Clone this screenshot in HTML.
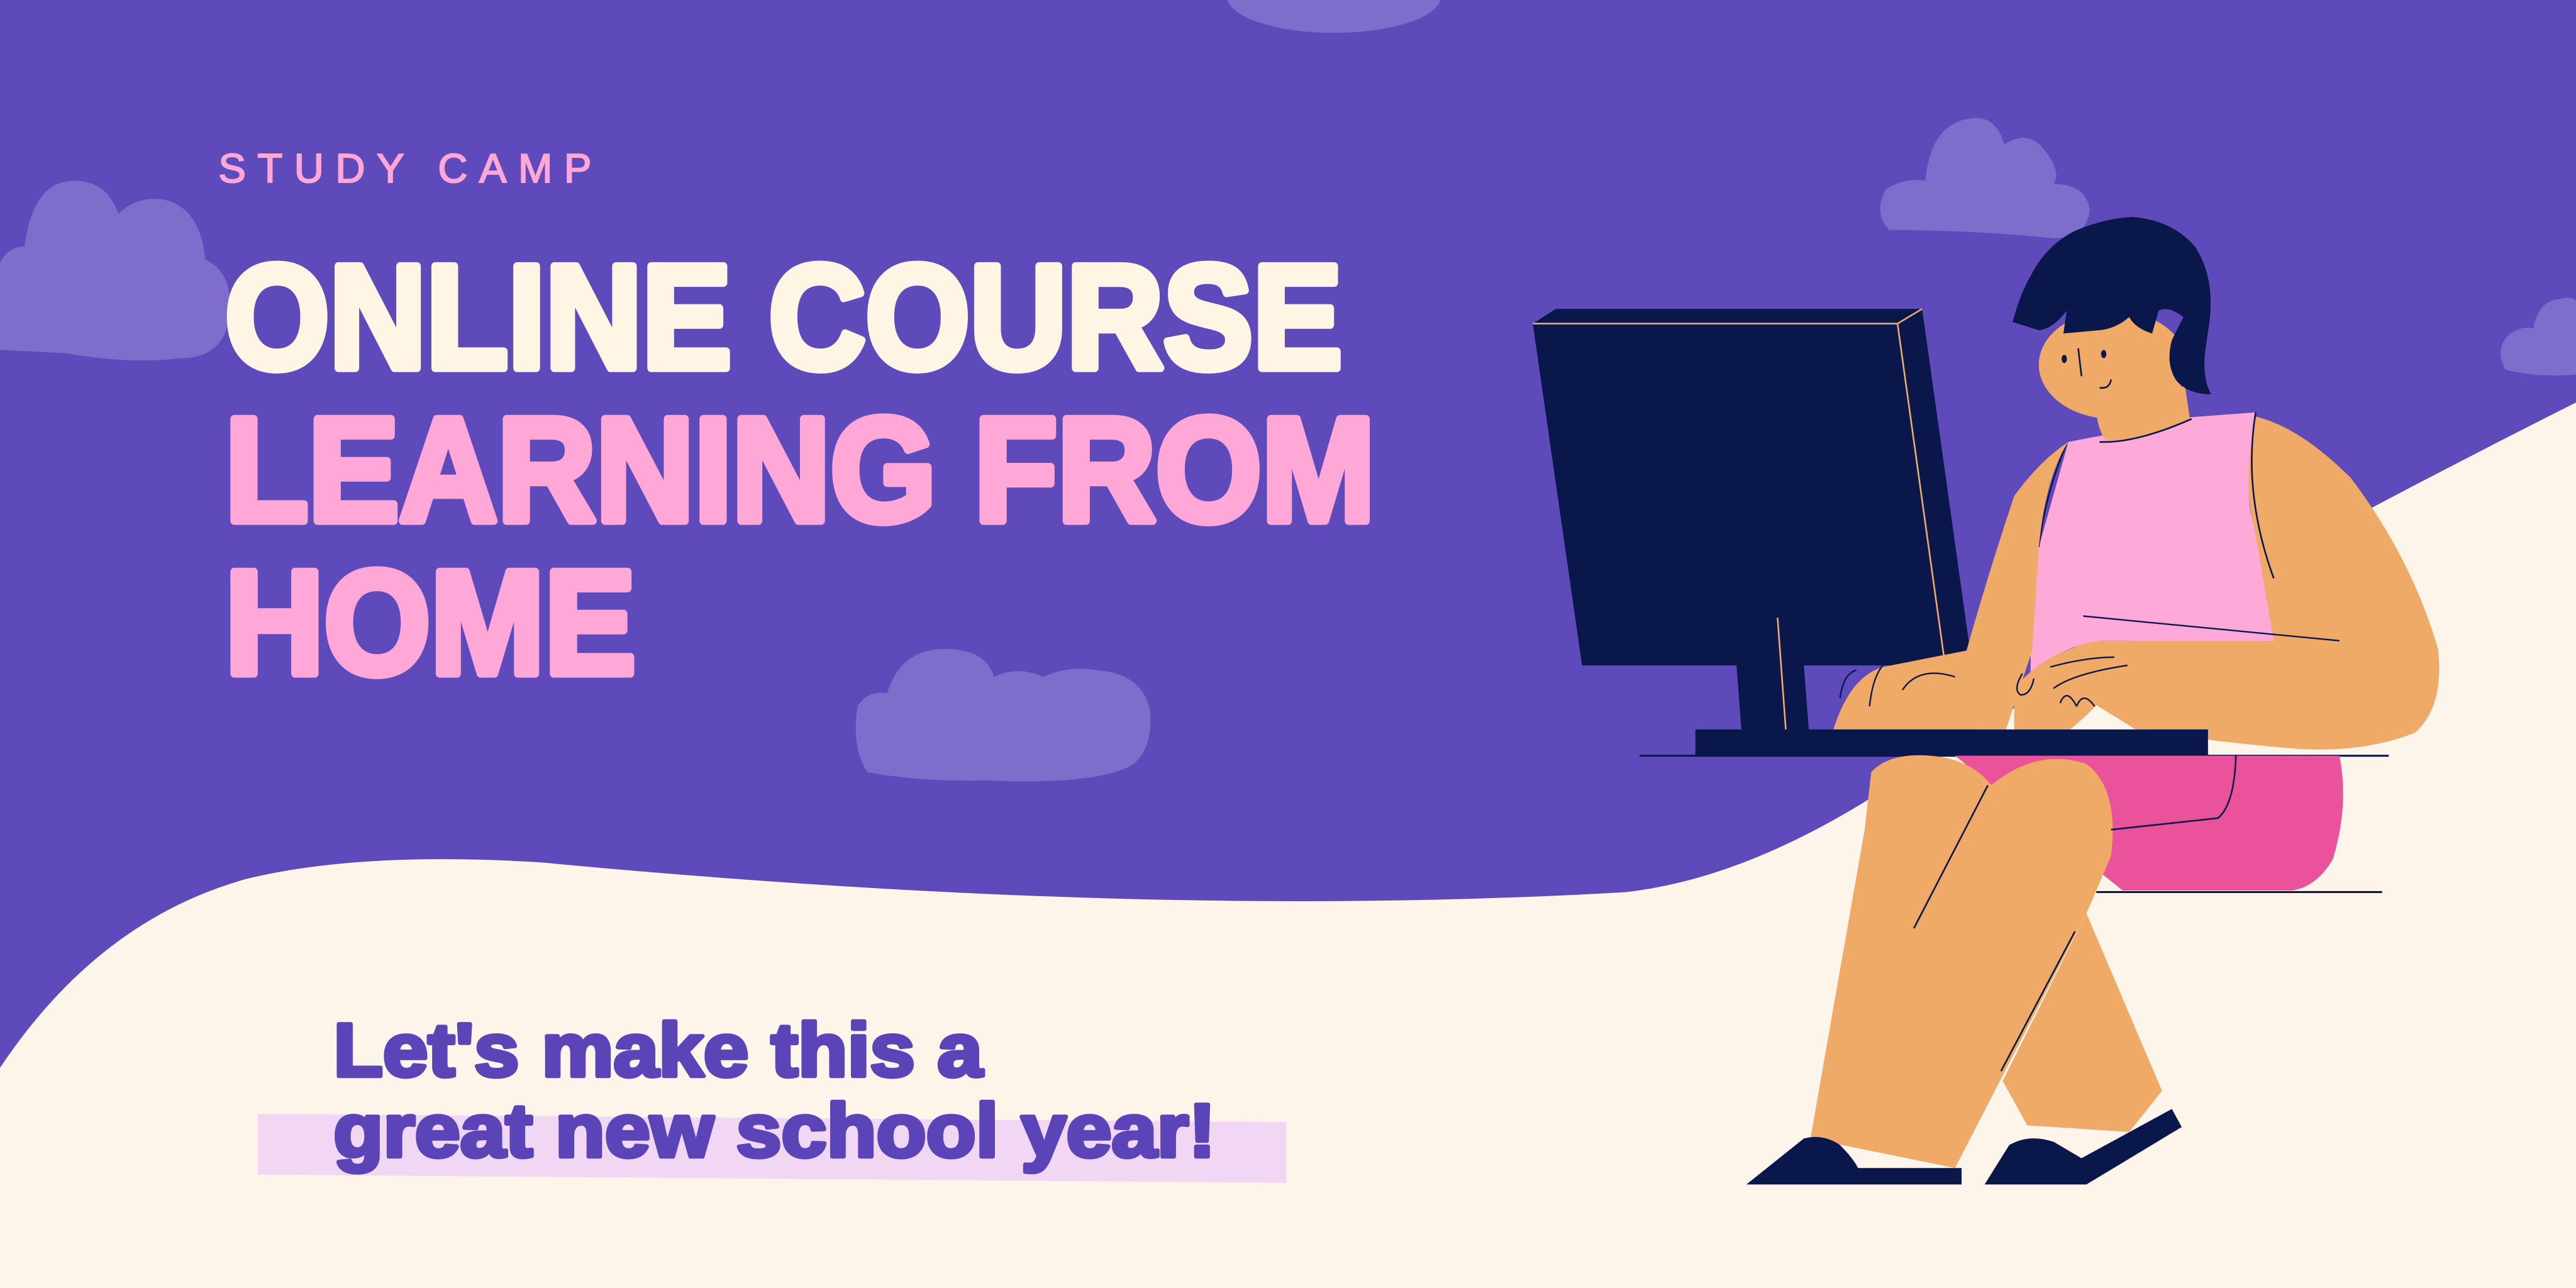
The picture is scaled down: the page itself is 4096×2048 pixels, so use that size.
<!DOCTYPE html>
<html><head><meta charset="utf-8"><style>
html,body{margin:0;padding:0;background:#5f4abb;}
svg{display:block;}
</style></head><body>
<svg width="4096" height="2048" viewBox="0 0 1568 784" preserveAspectRatio="none" xmlns="http://www.w3.org/2000/svg">
<rect width="1568" height="784" fill="#5f4abb"/>
<!-- clouds -->
<g fill="#7e6dca">
  <ellipse cx="812" cy="-2" rx="65" ry="22"/>
  <path d="M0 160 Q5 150 15 150 Q20 110 45 110 Q65 110 72 130 Q85 118 102 122 Q122 128 125 158 Q140 165 140 185 Q140 218 110 218 Q80 222 40 215 L0 213 Z"/>
  <path d="M528 470 Q518 455 522 430 Q528 420 540 422 Q548 395 575 395 Q600 395 605 412 Q620 405 635 412 Q650 405 668 408 Q695 410 700 432 Q702 455 690 465 Q670 478 600 475 Q560 476 528 470 Z"/>
  <path d="M1150 140 Q1140 130 1148 115 Q1160 108 1172 110 Q1175 75 1200 72 Q1215 70 1220 88 Q1235 78 1245 92 Q1255 105 1250 112 Q1270 112 1272 128 Q1270 145 1250 145 Q1200 140 1150 140 Z"/>
  <path d="M1525 225 Q1518 212 1528 203 Q1536 198 1542 200 Q1545 183 1558 182 Q1565 180 1568 183 L1568 228 Q1545 230 1525 225 Z"/>
</g>
<!-- ground -->
<path d="M0 650 Q60 560 150 535 Q220 518 330 525 Q700 560 990 543 Q1060 535 1140 485 Q1300 380 1568 245 L1568 784 L0 784 Z" fill="#fef5ea"/>
<!-- text -->
<text x="133" y="111" font-family="Liberation Sans, sans-serif" font-size="25" fill="#ffa8d8" stroke="#ffa8d8" stroke-width="0.8" textLength="227" lengthAdjust="spacing">STUDY CAMP</text>
<g font-family="Liberation Sans, sans-serif" font-weight="bold" font-size="90" stroke-width="5" stroke-linejoin="round">
  <text x="137" y="224" fill="#fff5e4" stroke="#fff5e4" textLength="680" lengthAdjust="spacingAndGlyphs">ONLINE COURSE</text>
  <text x="137" y="317" fill="#ffa8d8" stroke="#ffa8d8" textLength="700" lengthAdjust="spacingAndGlyphs">LEARNING FROM</text>
  <text x="137" y="410" fill="#ffa8d8" stroke="#ffa8d8" textLength="250" lengthAdjust="spacingAndGlyphs">HOME</text>
</g>
<path d="M157 678 L783 683 L783 720 L157 715 Z" fill="#f2d7f5"/>
<g font-family="Liberation Sans, sans-serif" font-weight="bold" font-size="46" fill="#5b44b8" stroke="#5b44b8" stroke-width="2.5" stroke-linejoin="round">
  <text x="203" y="655" textLength="395" lengthAdjust="spacingAndGlyphs">Let's make this a</text>
  <text x="203" y="704" textLength="537" lengthAdjust="spacingAndGlyphs">great new school year!</text>
</g>
<!-- monitor -->
<polygon points="947,188 1170,188 1155,197 933,197" fill="#0a174a"/>
<polygon points="933,197 1155,197 1184,405 963,405" fill="#0a174a"/>
<polygon points="1155,197 1170,188 1199,395 1184,405" fill="#0a174a"/>
<line x1="933" y1="197" x2="1155" y2="197" stroke="#efaa67" stroke-width="1"/>
<line x1="1155" y1="197" x2="1184" y2="405" stroke="#efaa67" stroke-width="1"/>
<line x1="1155" y1="197" x2="1170" y2="188" stroke="#efaa67" stroke-width="1"/>
<polygon points="1057,405 1098,405 1101,444 1060,444" fill="#0a174a"/>
<line x1="1082" y1="376" x2="1087" y2="444" stroke="#efaa67" stroke-width="1"/>
<!-- right arm back -->
<path d="M1364 252 Q1395 255 1431 291 Q1468 340 1484 395 Q1488 430 1470 446 Q1440 458 1400 456 Q1350 452 1300 444 L1248 412 Q1255 392 1278 390 L1384 390 Q1370 330 1364 252 Z" fill="#efaa67"/>
<!-- torso -->
<path d="M1259 269 L1280 265 L1333 254 L1373 251 Q1365 300 1372 320 L1384 390 L1278 390 Q1250 395 1240 410 L1236 444 L1236 400 Q1238 340 1241 333 Z" fill="#ffa9d9"/>
<!-- neck/face -->
<path d="M1275 240 L1330 235 L1333 255 Q1310 268 1282 268 Q1276 262 1275 240 Z" fill="#efaa67"/>
<ellipse cx="1286" cy="222" rx="45" ry="33" fill="#efaa67"/>
<!-- hair -->
<path d="M1225 196 Q1230 178 1236 168 Q1245 150 1262 141 Q1280 133 1298 132 Q1322 134 1336 150 Q1348 168 1345 195 L1342 216 Q1341 232 1346 240 Q1332 240 1325 232 Q1318 222 1322 207 L1329 193 Q1320 186 1314 189 L1310 203 Q1300 200 1296 193 Q1288 200 1278 201 L1256 203 L1258 189 Q1250 200 1241 201 Z" fill="#0a174a"/>
<ellipse cx="1256.5" cy="218.5" rx="1.6" ry="2.5" fill="#0a174a"/>
<ellipse cx="1280.5" cy="215.5" rx="1.6" ry="2.5" fill="#0a174a"/>
<g stroke="#0a174a" stroke-width="1" fill="none">
<line x1="1265" y1="212" x2="1267" y2="229"/>
<path d="M1278 236 Q1284 237 1285 231"/>
<path d="M1278 269 Q1300 270 1334 255"/>
<path d="M1258 270 Q1245 300 1241 333"/>
<path d="M1373 251 Q1365 300 1384 352"/>
</g>
<!-- left arm -->
<path d="M1259 269 Q1242 280 1226 302 Q1210 350 1197 396 L1146 406 Q1126 412 1116 444 L1221 444 L1237 396 L1241 334 Q1245 290 1259 269 Z" fill="#efaa67"/>
<!-- hand right -->
<path d="M1226 420 Q1240 400 1270 392 L1300 390 Q1290 420 1260 444 L1226 444 Z" fill="#efaa67"/>
<g stroke="#0a174a" stroke-width="0.9" fill="none">
<path d="M1231 410 Q1225 420 1230 423 Q1236 423 1238 413"/>
<path d="M1248 406 Q1270 400 1287 400"/>
<path d="M1250 419 Q1262 410 1295 405"/>
<path d="M1254 428 Q1258 418 1264 430"/>
<path d="M1264 430 Q1268 420 1275 430"/>
<path d="M1268 375 L1424 390"/>
<path d="M1120 425 Q1122 410 1130 408"/>
<path d="M1138 430 Q1140 410 1148 403"/>
<path d="M1158 420 Q1168 405 1190 412"/>
</g>
<!-- keyboard -->
<rect x="1032" y="444" width="312" height="16" fill="#0a174a"/>
<line x1="998" y1="460" x2="1454" y2="460" stroke="#0a174a" stroke-width="1.2"/>
<!-- shorts -->
<path d="M1190 460 L1424 460 Q1430 490 1420 523 Q1410 540 1395 542 L1292 542 Z" fill="#ea529b"/>
<line x1="1276" y1="543" x2="1450" y2="543" stroke="#0a174a" stroke-width="1.2"/>
<!-- legs -->
<path d="M1270 556 L1316 664 L1296 689 L1234 685 L1219 658 Z" fill="#efaa67"/>
<path d="M1139 470 Q1150 458 1175 460 Q1200 462 1212 478 Q1240 455 1270 465 Q1290 480 1285 521 L1270 556 L1190 711 L1102 693 L1135 505 Z" fill="#efaa67"/>
<g stroke="#0a174a" stroke-width="1" fill="none">
<line x1="1210" y1="478" x2="1165" y2="565"/>
<line x1="1263" y1="567" x2="1218" y2="652"/>
<path d="M1285 505 L1350 498 Q1360 490 1361 460"/>
</g>
<!-- shoes -->
<path d="M1063 721 L1098 693 Q1110 690 1120 697 Q1128 705 1131 711 L1194 711 L1194 721 Z" fill="#0a174a"/>
<path d="M1208 721 L1223 697 Q1235 690 1250 695 L1267 705 L1322 675 L1328 686 L1270 721 Z" fill="#0a174a"/>
</svg>
</body></html>
